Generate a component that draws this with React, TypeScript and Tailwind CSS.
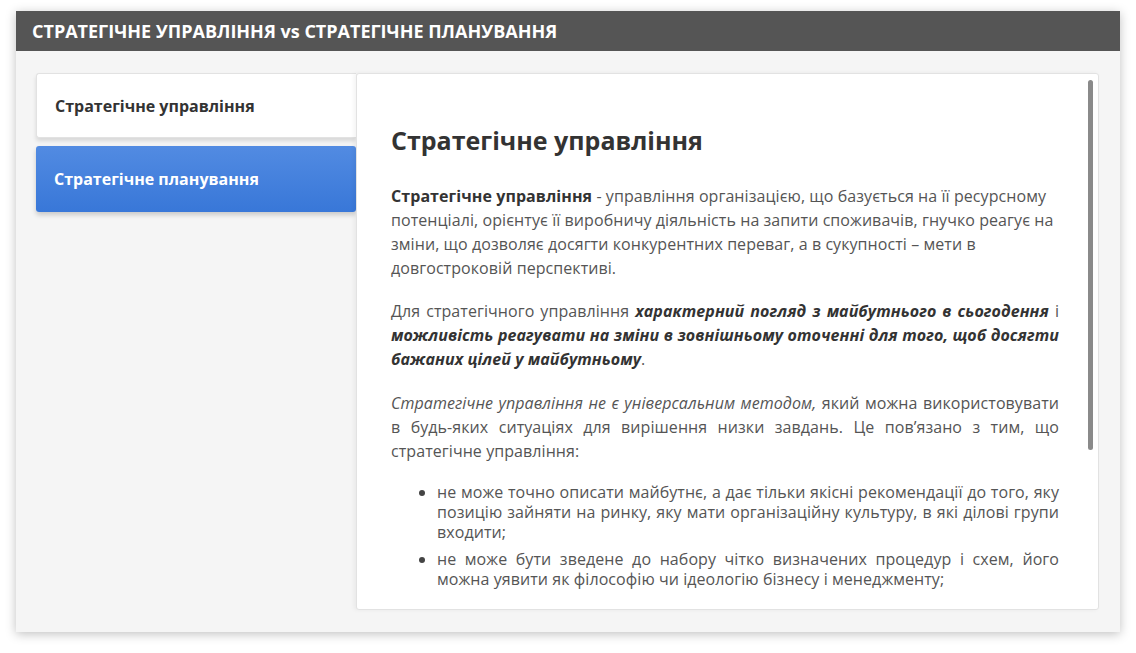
import React from "react";

const TABS = ["Стратегічне управління", "Стратегічне планування"];

export default function App() {
  return (
    <div className="min-h-screen bg-white pt-[11px] px-4 font-['Open_Sans',sans-serif]">
      <div className="w-[1104px] h-[621px] flex flex-col bg-[#f5f5f5] shadow-[0_2px_10px_rgba(0,0,0,0.25)]">
        <div className="h-10 shrink-0 bg-[#555555] flex items-center px-4">
          <h1 className="text-white font-bold text-[18px]">
            СТРАТЕГІЧНЕ УПРАВЛІННЯ vs СТРАТЕГІЧНЕ ПЛАНУВАННЯ
          </h1>
        </div>
        <div className="flex-1 flex pl-5 pr-[21px] pt-[22px] pb-[22px] min-h-0">
          <div className="w-[320px] shrink-0 flex flex-col gap-2">
            <div className="h-[65px] flex items-center pl-[18px] bg-white rounded-l-[3px] border border-r-0 border-[#e2e2e2] shadow-[0_3px_4px_rgba(0,0,0,0.12)] text-[16px] font-bold text-[#333]">
              {TABS[0]}
            </div>
            <div className="h-[66px] flex items-center pl-[18px] rounded-[3px] bg-gradient-to-b from-[#528be2] to-[#3877d8] shadow-[0_3px_5px_rgba(0,0,0,0.18)] text-[16px] font-bold text-white">
              {TABS[1]}
            </div>
          </div>
          <div className="relative flex-1 flex flex-col pb-[14px] bg-white border border-[#e2e2e2] rounded-[3px] shadow-[-2px_0_4px_rgba(0,0,0,0.05)]">
            <div className="flex-1 min-h-0 overflow-hidden pl-[34px] pr-[39px] pt-[48px] text-[16px] text-[#555] tracking-[0.07px]">
              <h2 className="text-[25px] font-bold text-[#333] leading-[36px] mb-[26px] tracking-normal">
                Стратегічне управління
              </h2>
              <p className="leading-6 mb-[19px]">
                <b className="text-[#333]">Стратегічне управління</b> - управління організацією, що базується на її ресурсному
                потенціалі, орієнтує її виробничу діяльність на запити споживачів, гнучко реагує на
                зміни, що дозволяє досягти конкурентних переваг, а в сукупності – мети в
                довгостроковій перспективі.
              </p>
              <p className="leading-6 mb-[20px] text-justify">
                Для стратегічного управління{" "}
                <b className="italic text-[#333]">характерний погляд з майбутнього в сьогодення</b> і{" "}
                <b className="italic text-[#333]">
                  можливість реагувати на зміни в зовнішньому оточенні для того, щоб досягти бажаних цілей у майбутньому
                </b>
                .
              </p>
              <p className="leading-6 mb-[19px] text-justify">
                <i>Стратегічне управління не є універсальним методом,</i> який можна використовувати в будь-яких
                ситуаціях для вирішення низки завдань. Це пов’язано з тим, що стратегічне управління:
              </p>
              <ul className="list-disc pl-[46px] flex flex-col gap-[7px] leading-5 text-justify marker:text-[#444]">
                <li>
                  не може точно описати майбутнє, а дає тільки якісні рекомендації до того, яку позицію зайняти на
                  ринку, яку мати організаційну культуру, в які ділові групи входити;
                </li>
                <li>
                  не може бути зведене до набору чітко визначених процедур і схем, його можна уявити як філософію чи
                  ідеологію бізнесу і менеджменту;
                </li>
                <li>
                  вимагає значних зусиль, витрат часу і ресурсів для запровадження стратегічного планування та
                  створення системи стратегічного управління;
                </li>
                <li>
                  негативні наслідки помилок стратегічного передбачення значно зростають.
                </li>
              </ul>
            </div>
            <div className="absolute right-[5px] top-[6px] w-[5px] h-[370px] rounded-full bg-[#8a8a8a]" />
          </div>
        </div>
      </div>
    </div>
  );
}
